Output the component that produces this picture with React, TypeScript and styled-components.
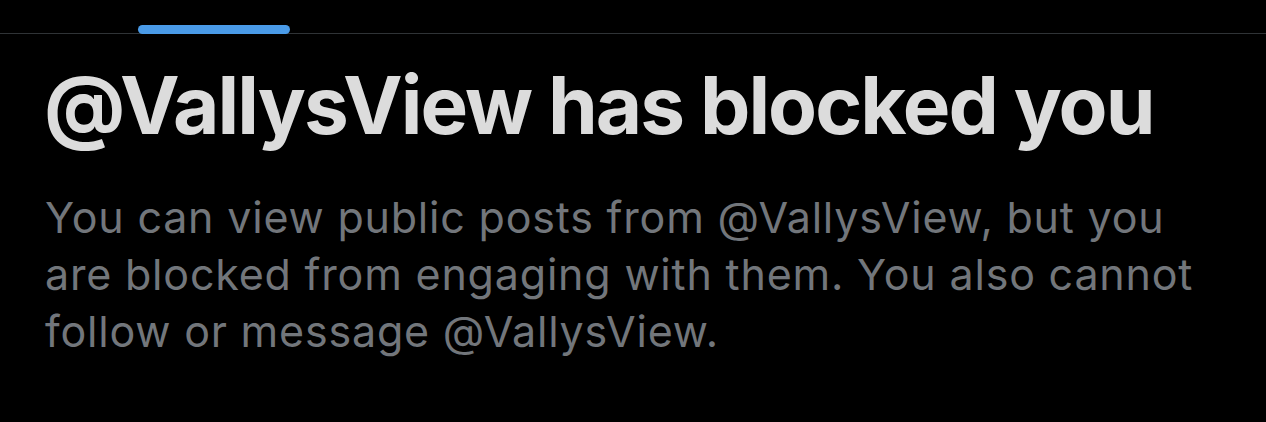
import React from "react";
import styled, { createGlobalStyle } from "styled-components";

const GlobalStyle = createGlobalStyle`
  html, body {
    margin: 0;
    padding: 0;
    background: #000;
  }
  body {
    font-family: Inter, "Liberation Sans", Arial, sans-serif;
    -webkit-font-smoothing: antialiased;
  }
`;

const Screen = styled.div`
  width: 1266px;
  height: 422px;
  background: #000;
  overflow: hidden;
`;

const TabBar = styled.div`
  display: flex;
  align-items: flex-end;
  height: 33px;
  padding-left: 138px;
  border-bottom: 1px solid #2f3336;
`;

const TabIndicator = styled.div`
  width: 152px;
  height: 9px;
  border-radius: 5px;
  background: #4a9be8;
  margin-bottom: -1px;
`;

const Content = styled.div`
  padding: 0 44px;
`;

const Title = styled.h1`
  margin: 0;
  padding-top: 21px;
  font-size: 80px;
  line-height: 100px;
  font-weight: 700;
  color: #dcdcdc;
  letter-spacing: -2px;
  white-space: nowrap;
`;

const Message = styled.p`
  margin: 34px 0 0;
  padding-left: 1px;
  font-size: 43px;
  line-height: 57px;
  font-weight: 400;
  letter-spacing: 0.8px;
  color: #72767b;
  white-space: nowrap;
`;

export default function App() {
  return (
    <Screen>
      <GlobalStyle />
      <TabBar>
        <TabIndicator />
      </TabBar>
      <Content>
        <Title>@VallysView has blocked you</Title>
        <Message>
          You can view public posts from @VallysView, but you
          <br />
          are blocked from engaging with them. You also cannot
          <br />
          follow or message @VallysView.
        </Message>
      </Content>
    </Screen>
  );
}
